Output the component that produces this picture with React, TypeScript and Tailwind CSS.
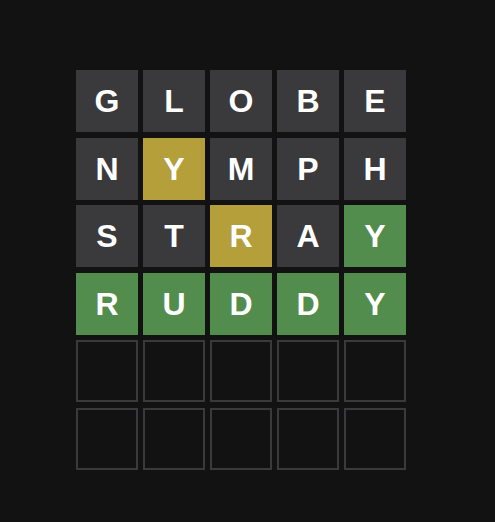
import React from "react";

const rows: { l: string; s: "g" | "y" | "x" | "e" }[][] = [
  [..."GLOBE"].map((l) => ({ l, s: "x" as const })),
  [
    { l: "N", s: "x" },
    { l: "Y", s: "y" },
    { l: "M", s: "x" },
    { l: "P", s: "x" },
    { l: "H", s: "x" },
  ],
  [
    { l: "S", s: "x" },
    { l: "T", s: "x" },
    { l: "R", s: "y" },
    { l: "A", s: "x" },
    { l: "Y", s: "g" },
  ],
  [..."RUDDY"].map((l) => ({ l, s: "g" as const })),
  [..."     "].map(() => ({ l: "", s: "e" as const })),
  [..."     "].map(() => ({ l: "", s: "e" as const })),
];

function Tile({ l, s }: { l: string; s: "g" | "y" | "x" | "e" }) {
  const cls =
    s === "g"
      ? "bg-[#538d4e]"
      : s === "y"
      ? "bg-[#b59f3b]"
      : s === "x"
      ? "bg-[#3a3a3c]"
      : "border-2 border-[#3a3a3c]";
  return (
    <div
      className={`w-[62px] h-[62px] flex items-center justify-center text-white font-bold text-[32px] leading-none ${cls}`}
      style={{ fontFamily: "'Liberation Sans', Arial, sans-serif" }}
    >
      {l}
    </div>
  );
}

export default function App() {
  return (
    <div className="w-[495px] h-[522px] bg-[#121213] pl-[76px] pt-[70px]">
      <div className="flex flex-col gap-[5.6px]">
        {rows.map((r, i) => (
          <div key={i} className="flex gap-[5px]">
            {r.map((t, j) => (
              <Tile key={j} l={t.l} s={t.s} />
            ))}
          </div>
        ))}
      </div>
    </div>
  );
}
